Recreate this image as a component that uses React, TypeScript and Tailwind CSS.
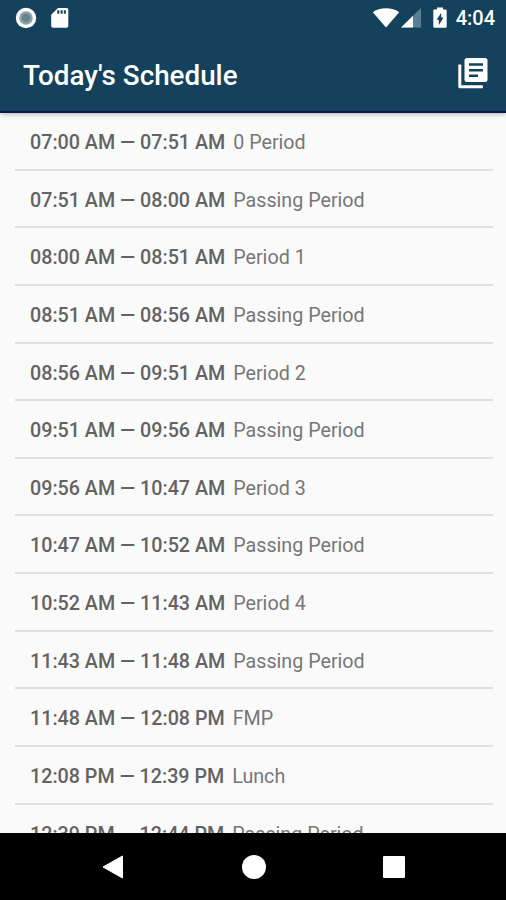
const periods = [
  { start: "07:00 AM", end: "07:51 AM", name: "0 Period" },
  { start: "07:51 AM", end: "08:00 AM", name: "Passing Period" },
  { start: "08:00 AM", end: "08:51 AM", name: "Period 1" },
  { start: "08:51 AM", end: "08:56 AM", name: "Passing Period" },
  { start: "08:56 AM", end: "09:51 AM", name: "Period 2" },
  { start: "09:51 AM", end: "09:56 AM", name: "Passing Period" },
  { start: "09:56 AM", end: "10:47 AM", name: "Period 3" },
  { start: "10:47 AM", end: "10:52 AM", name: "Passing Period" },
  { start: "10:52 AM", end: "11:43 AM", name: "Period 4" },
  { start: "11:43 AM", end: "11:48 AM", name: "Passing Period" },
  { start: "11:48 AM", end: "12:08 PM", name: "FMP" },
  { start: "12:08 PM", end: "12:39 PM", name: "Lunch" },
  { start: "12:39 PM", end: "12:44 PM", name: "Passing Period" },
];

const StatusBar = () => {
  return (
    <div className="flex h-[35px] items-center justify-between pl-[15px] pr-[11px]">
      <div className="flex items-center gap-[14px]">
        <svg className="h-[22px] w-[22px]" viewBox="0 0 22 22">
          <circle cx="11" cy="11" r="10.2" fill="#fff" />
          <circle cx="11" cy="11" r="6.8" fill="#8ba3a9" />
          <circle cx="11" cy="11" r="4.3" fill="#66858c" />
        </svg>
        <svg className="h-[22px] w-[18px]" viewBox="0 0 18 22">
          <path fill="#fff" d="M7 1h8.500a1.800 1.800 0 0 1 1.800 1.800V19a1.800 1.800 0 0 1-1.800 1.800H2A1.800 1.800 0 0 1 .2 19V7.800z" />
          <path fill="#14425d" d="M6.300 3.200h2v3.500h-2zM9.600 3.200h2v3.500h-2zM12.800 3.200h2v3.500h-2z" />
        </svg>
      </div>
      <div className="flex items-center">
        <svg className="h-[22px] w-[28px]" viewBox="0 0 28 22">
          <path fill="#fff" d="M14 20.500.8 5.200C4.200 2.600 8.800 1.200 14 1.200s9.800 1.400 13.200 4z" />
        </svg>
        <svg className="h-[22px] w-[22px]" viewBox="0 0 22 22">
          <path fill="#5b7f92" d="M21 1v19.500H1z" />
          <path fill="#fff" d="M13 8.800v11.700H1z" />
        </svg>
        <svg className="ml-2.5 h-[22px] w-[16px]" viewBox="0 0 16 22">
          <path fill="#fff" d="M5 .5h6v2h2.500a1.200 1.200 0 0 1 1.200 1.200v15.900a1.200 1.200 0 0 1-1.200 1.200h-11a1.200 1.200 0 0 1-1.200-1.200V3.700a1.200 1.200 0 0 1 1.200-1.200H5z" />
          <path fill="#14425d" d="M9.200 5.800v4.700h2.300l-4.700 7.700v-5.500H4.600z" />
        </svg>
        <span className="ml-2 text-[20px] leading-none font-medium text-white">4:04</span>
      </div>
    </div>
  );
};

const App = () => {
  return (
    <div className="flex h-[900px] w-[506px] flex-col overflow-hidden bg-[#fafafa] font-['Roboto',sans-serif]">
      <header className="relative h-[113px] shrink-0 border-b-2 border-[#071550] bg-[#14425d] shadow-[0_1px_5px_rgba(0,0,0,0.3)]">
        <StatusBar />
        <div className="flex h-[77px] items-center justify-between pl-[23px] pr-[17px]">
          <h1 className="pt-[4px] text-[27.800px] leading-none font-medium text-white">Today's Schedule</h1>
          <svg className="h-[34px] w-[32px]" viewBox="0 0 32 34">
            <path fill="none" stroke="#fff" strokeWidth="3" strokeLinejoin="round" d="M2.800 7.500v22.200h23" />
            <rect x="7.500" y="1" width="23" height="24" rx="2.500" fill="#fff" />
            <path fill="#14425d" d="M12 6.300h14v2.500H12zM12 12h14v2.500H12zM12 17.500h9v2.500h-9z" />
          </svg>
        </div>
      </header>

      <main className="min-h-0 flex-1 overflow-hidden pl-[15px] pr-[13px]">
        {periods.map((period) => (
          <div
            key={period.start}
            className="flex h-[57.650px] items-center gap-[8px] border-b-2 border-[#e0e0e0] pt-[4px] pl-[15px] text-[19.700px] leading-none whitespace-nowrap"
          >
            <span className="font-medium text-[#636363]">
              {period.start} — {period.end}
            </span>
            <span className="text-[#777]">{period.name}</span>
          </div>
        ))}
      </main>

      <nav className="flex h-[67px] shrink-0 items-center bg-black pl-[102px]">
        <svg className="h-6 w-[22px]" viewBox="0 0 22 24">
          <path fill="#fff" stroke="#fff" strokeLinejoin="round" d="M20.500 1v22L1 12z" />
        </svg>
        <div className="ml-[118px] h-6 w-6 rounded-full bg-white" />
        <div className="ml-[117px] h-[22px] w-[22px] rounded-[1px] bg-white" />
      </nav>
    </div>
  );
};

export default App;
